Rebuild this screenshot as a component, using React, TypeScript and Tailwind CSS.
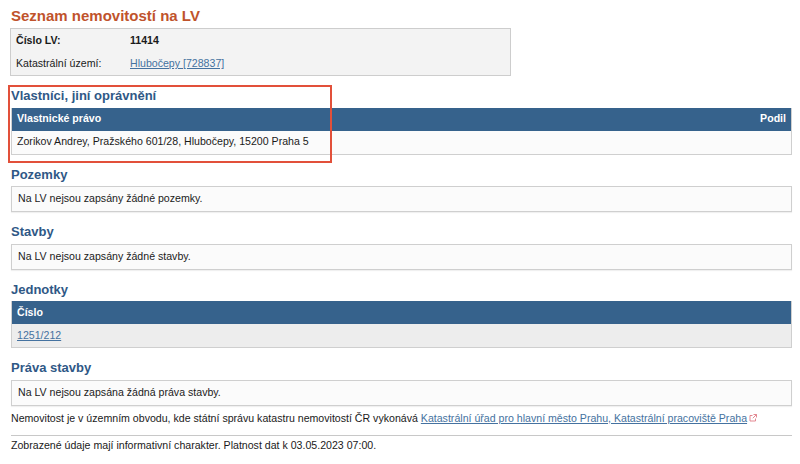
import React from 'react';

const font = { fontFamily: '"Liberation Sans", Arial, Helvetica, sans-serif' };

function Heading({ children }: { children: React.ReactNode }) {
  return <h2 className="mt-3 mb-1 text-[13px] font-bold leading-[15.5px] text-[#2f5886]">{children}</h2>;
}

function EmptyBox({ children }: { children: React.ReactNode }) {
  return (
    <div className="flex h-[26px] items-center border border-[#cfcfcf] bg-[#fbfbfb] px-[6px] shadow-[0_1px_1px_rgba(0,0,0,0.06)]">
      {children}
    </div>
  );
}

function TableHead({ left, right }: { left: string; right?: string }) {
  return (
    <div className="flex h-[23px] items-center justify-between bg-[#36628c] px-[5px] font-bold text-white">
      <span>{left}</span>
      {right && <span>{right}</span>}
    </div>
  );
}

function ExternalIcon() {
  return (
    <svg width="8" height="8" viewBox="0 0 8 8" className="ml-[2px] inline-block align-[0px]">
      <path d="M3.5 1.5H1V7H6.5V4.5" fill="none" stroke="#e07a86" strokeWidth="0.9" />
      <path d="M4.5 0.5H7.5V3.5M7.5 0.5L3.8 4.2" fill="none" stroke="#e07a86" strokeWidth="0.9" />
    </svg>
  );
}

export default function App() {
  return (
    <div className="relative min-h-[464px] bg-white pl-[11px] pr-[8px] pt-[7px] text-[10.6px] text-[#1a1a1a]" style={font}>
      <h1 className="text-[15px] font-bold leading-[18px] text-[#c0532c]">Seznam nemovitostí na LV</h1>

      <div className="mt-[3px] -ml-[1px] w-[501px] border border-[#cdcdcd] bg-[#f3f3f3] px-[5px]">
        <div className="flex h-[24px] items-center font-bold">
          <span className="w-[114px]">Číslo LV:</span>
          <span>11414</span>
        </div>
        <div className="flex h-[22px] items-center">
          <span className="w-[114px]">Katastrální území:</span>
          <a href="#" className="text-[#4572a0] underline">Hlubočepy [728837]</a>
        </div>
      </div>

      <Heading>Vlastníci, jiní oprávnění</Heading>
      <div className="border border-[#cfcfcf] border-t-0 bg-[#fbfbfb]">
        <TableHead left="Vlastnické právo" right="Podil" />
        <div className="flex h-[23px] items-center px-[5px]">
          Zorikov Andrey, Pražského 601/28, Hlubočepy, 15200 Praha 5
        </div>
      </div>

      <Heading>Pozemky</Heading>
      <EmptyBox>Na LV nejsou zapsány žádné pozemky.</EmptyBox>

      <Heading>Stavby</Heading>
      <EmptyBox>Na LV nejsou zapsány žádné stavby.</EmptyBox>

      <Heading>Jednotky</Heading>
      <div className="border border-[#cfcfcf] border-t-0 bg-[#ededed]">
        <TableHead left="Číslo" />
        <div className="flex h-[23px] items-center px-[5px]">
          <a href="#" className="text-[#4572a0] underline">1251/212</a>
        </div>
      </div>

      <Heading>Práva stavby</Heading>
      <EmptyBox>Na LV nejsou zapsána žádná práva stavby.</EmptyBox>

      <p className="mt-[5px] leading-[14px]">
        Nemovitost je v územním obvodu, kde státní správu katastru nemovitostí ČR vykonává{' '}
        <a href="#" className="text-[#4572a0] underline">Katastrální úřad pro hlavní město Prahu, Katastrální pracoviště Praha</a>
        <ExternalIcon />
      </p>

      <hr className="mt-[10px] border-t border-[#c8c8c8]" />

      <p className="mt-[2px] leading-[14px]">Zobrazené údaje mají informativní charakter. Platnost dat k 03.05.2023 07:00.</p>

      {/* annotation frame */}
      <div className="absolute left-[8px] top-[85px] h-[78px] w-[324px] border-2 border-[#e2503a]" />
    </div>
  );
}
